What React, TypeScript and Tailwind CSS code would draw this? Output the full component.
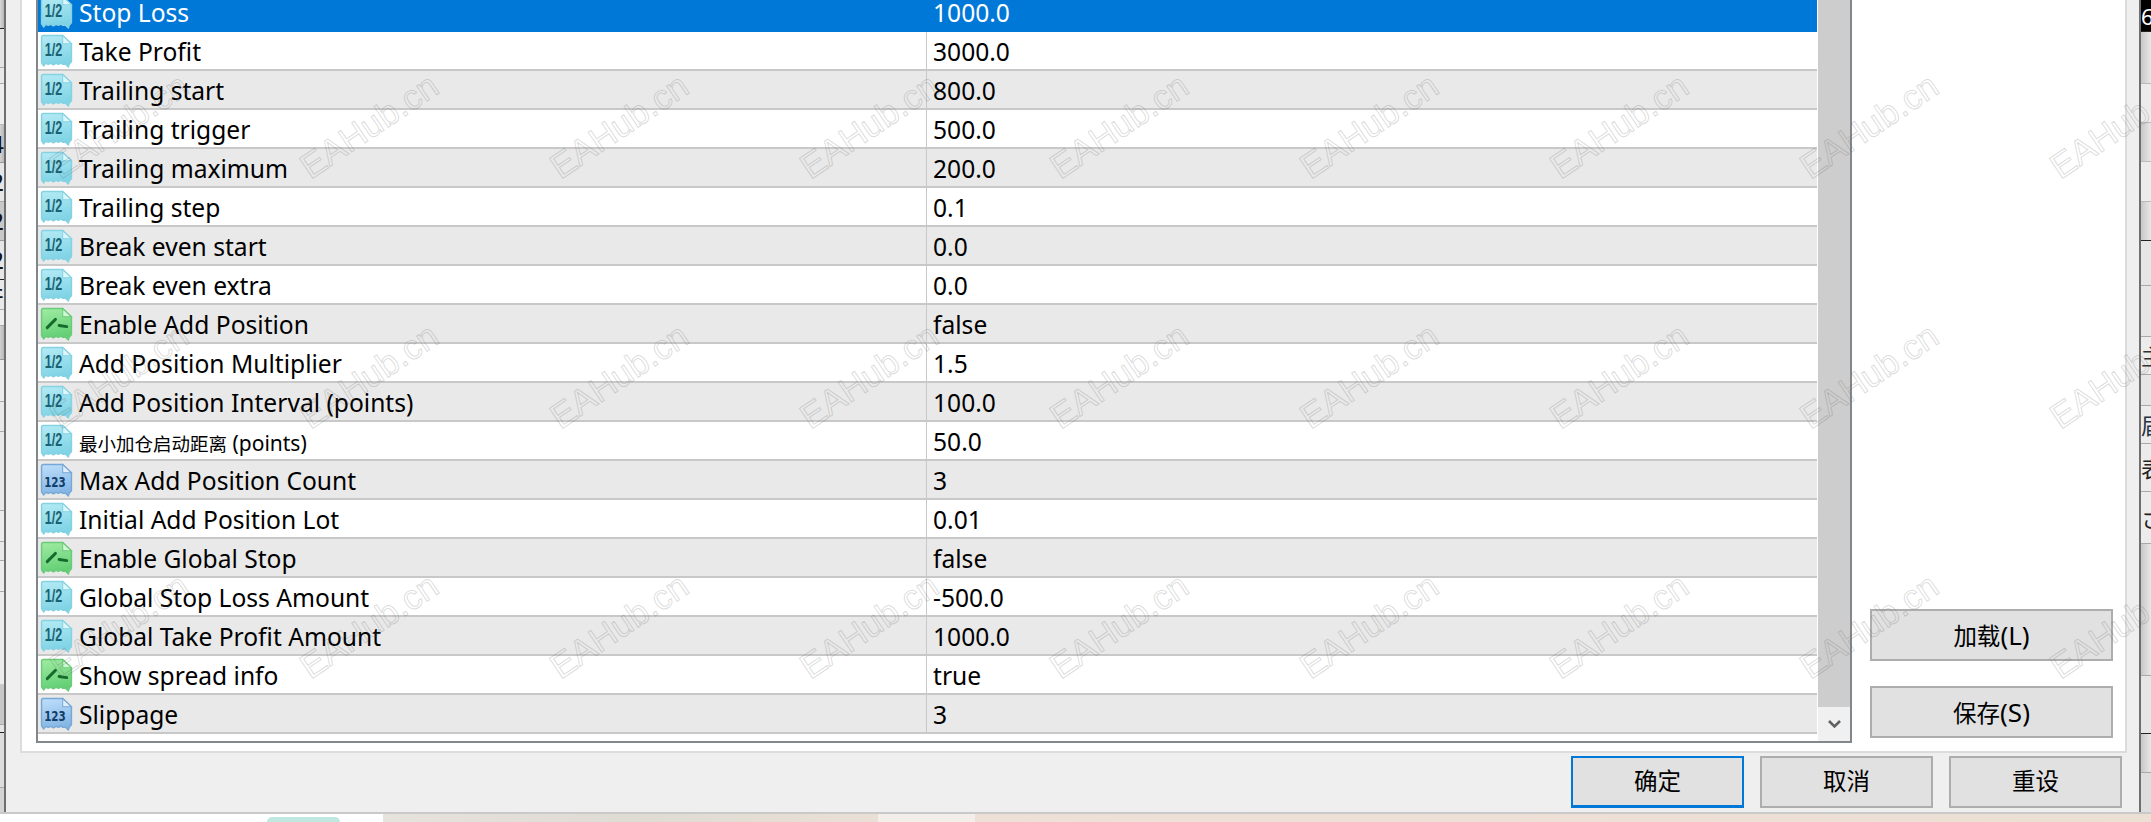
import React from "react";

type Kind = "d" | "b" | "n";
const rows: [Kind, React.ReactNode, string][] = [
  ["d", "Stop Loss", "1000.0"],
  ["d", "Take Profit", "3000.0"],
  ["d", "Trailing start", "800.0"],
  ["d", "Trailing trigger", "500.0"],
  ["d", "Trailing maximum", "200.0"],
  ["d", "Trailing step", "0.1"],
  ["d", "Break even start", "0.0"],
  ["d", "Break even extra", "0.0"],
  ["b", "Enable Add Position", "false"],
  ["d", "Add Position Multiplier", "1.5"],
  ["d", "Add Position Interval (points)", "100.0"],
  ["d", <span className="text-[21px]"><span className="text-[18.5px]">最小加仓启动距离</span> (points)</span>, "50.0"],
  ["n", "Max Add Position Count", "3"],
  ["d", "Initial Add Position Lot", "0.01"],
  ["b", "Enable Global Stop", "false"],
  ["d", "Global Stop Loss Amount", "-500.0"],
  ["d", "Global Take Profit Amount", "1000.0"],
  ["b", "Show spread info", "true"],
  ["n", "Slippage", "3"],
];

const body = "M1.5 3 Q1.5 1.5 3 1.5 H22 L30.5 9.5 V27 L28.5 29 L27.5 32 L25 29.5 H22 L20.5 28 L18 29.5 L15.5 28.5 L13 30 L10.5 28.5 L8 29.5 L5.5 28.5 L3.5 31 L1.5 28 Z";

const palette = {
  d: { a: "#b4ebf5", b: "#7ed3e5", s: "#86d2e3", f: "#def6fa" },
  b: { a: "#a0ecA2", b: "#62cf74", s: "#6ccb7a", f: "#d3f7d4" },
  n: { a: "#bfdffb", b: "#83b5e4", s: "#78a8d6", f: "#e2effb" },
};

function Icon({ kind }: { kind: Kind }) {
  const p = palette[kind];
  const id = `g-${kind}`;
  return (
    <svg width="33" height="34" viewBox="0 0 32 33" className="shrink-0">
      <defs>
        <linearGradient id={id} x1="0" y1="0" x2="0.2" y2="1">
          <stop offset="0" stopColor={p.a} />
          <stop offset="1" stopColor={p.b} />
        </linearGradient>
      </defs>
      <path d={body} fill={`url(#${id})`} stroke={p.s} strokeWidth="1.4" strokeLinejoin="round" />
      <path d="M22 1.5 V9.5 H30.5 Z" fill={p.f} stroke={p.s} strokeWidth="1" />
      {kind === "d" && (
        <text x="13" y="21" textAnchor="middle" fontFamily="'Liberation Sans',sans-serif" fontWeight="700" fontSize="18" textLength="17" lengthAdjust="spacingAndGlyphs" fill="#1a6272">
          1/2
        </text>
      )}
      {kind === "n" && (
        <text x="14.5" y="23" textAnchor="middle" fontFamily="'DejaVu Sans',sans-serif" fontWeight="700" fontSize="13" textLength="21" lengthAdjust="spacingAndGlyphs" fill="#123f69">
          123
        </text>
      )}
      {kind === "b" && (
        <g fill="none" stroke="#156b2c" strokeWidth="2.8" strokeLinecap="round">
          <path d="M7 20 L15 12" />
          <path d="M18.5 18 L26 19" />
        </g>
      )}
    </svg>
  );
}

function Row({ kind, name, value, index }: { kind: Kind; name: React.ReactNode; value: string; index: number }) {
  const selected = index === 0;
  const bg = selected ? "bg-[#0078d7] text-white border-[#0078d7]" : index % 2 === 1 ? "bg-white text-black border-[#c8c8c8]" : "bg-[#e9e9e9] text-black border-[#c8c8c8]";
  return (
    <div className={`grid grid-cols-[888px_1fr] h-[39px] shrink-0 border-b-2 ${bg}`}>
      <div className="flex items-center pl-[2px] gap-[6px] whitespace-nowrap">
        <Icon kind={kind} />
        <span className="pt-[3px]">{name}</span>
      </div>
      <div className={`flex items-center pl-[6px] pt-[3px] border-l ${selected ? "border-[#0078d7]" : "border-[#c8c8c8]"}`}>{value}</div>
    </div>
  );
}

function Btn({ children, focus, wide }: { children: React.ReactNode; focus?: boolean; wide?: boolean }) {
  return (
    <div
      className={`flex items-center justify-center h-[52px] bg-[#e1e1e1] text-black text-[23.5px] ${wide ? "w-[243px]" : "w-[173px]"} ${
        focus ? "border-2 border-[#0078d7] border-b-[3px]" : "border-2 border-[#adadad]"
      }`}
    >
      {children}
    </div>
  );
}

const leftSegs: [number, string, string, string?][] = [
  [29, "bg-gradient-to-r from-[#d8d8d8] to-[#b8b8b8]", "border-[#222]"],
  [39, "bg-[#e4e4e4]", "border-[#aaa]"],
  [16, "bg-[#e8e8e8]", "border-[#aaa]"],
  [41, "bg-[#ededed]", "border-[#bbb]"],
  [38, "bg-gradient-to-r from-[#d2d2d2] to-[#b8b8b8]", "border-[#999]", "4"],
  [39, "bg-[#e6e6e6]", "border-[#aaa]", "2"],
  [39, "bg-[#c8c8c8]", "border-[#999]", "2"],
  [39, "bg-[#e6e6e6]", "border-[#222]", "2"],
  [30, "bg-[#e8e8e8]", "border-[#aaa]", "井"],
  [16, "bg-[#eeeeee]", "border-[#aaa]"],
  [34, "bg-gradient-to-r from-[#d0d0d0] to-[#b8b8b8]", "border-[#999]"],
  [42, "bg-[#ececec]", "border-[#aaa]"],
  [30, "bg-[#e8e8e8]", "border-[#aaa]"],
  [79, "bg-[#e8e8e8]", "border-[#aaa]"],
  [31, "bg-[#ececec]", "border-[#aaa]"],
  [19, "bg-[#e8e8e8]", "border-[#aaa]"],
  [31, "bg-[#ececec]", "border-[#aaa]"],
  [93, "bg-[#ececec]", "border-[#ccc]"],
  [40, "bg-[#c8c8c8]", "border-[#aaa]"],
  [8, "bg-[#e6e6e6]", "border-[#222]"],
  [55, "bg-[#dcdcdc]", "border-[#aaa]"],
  [24, "bg-[#d4d4d4]", "border-transparent"],
];

const G = "bg-gradient-to-r from-[#c8c8c8] to-[#e8e8e8]";
const rightSegs: [number, string, string, string?][] = [
  [32, "bg-black text-white", "border-[#222]", "6"],
  [52, G, "border-[#bbb]"],
  [39, "bg-[#ececec]", "border-[#bbb]"],
  [39, G, "border-[#bbb]"],
  [40, "bg-[#ececec]", "border-[#bbb]"],
  [39, G, "border-[#222]"],
  [45, "bg-[#e6e6e6]", "border-[#aaa]"],
  [51, "bg-[#e6e6e6]", "border-[#aaa]"],
  [38, "bg-[#ececec] text-[#333]", "border-[#aaa]", "主"],
  [31, "bg-[#e6e6e6]", "border-[#aaa]"],
  [38, "bg-[#ececec] text-[#234]", "border-[#aaa]", "届"],
  [48, "bg-[#ececec] text-[#222]", "border-[#aaa]", "表"],
  [52, "bg-[#ececec] text-[#222]", "border-[#aaa]", "さ"],
  [132, G, "border-[#aaa]"],
  [58, "bg-[#e6e6e6]", "border-[#222]"],
  [39, G, "border-[#aaa]"],
  [39, "bg-[#dedede]", "border-transparent"],
];

const cells = Array.from({ length: 50 }, (_, i) => i);

export default function App() {
  return (
    <div className="relative w-[2151px] h-[822px] overflow-hidden flex flex-col text-[24.6px] leading-none font-['Noto_Sans','Noto_Sans_CJK_SC',sans-serif]">
      <div className="flex h-[812px] shrink-0">
        <div className="flex w-[6px] shrink-0">
          <div className="flex flex-col w-[4px] overflow-hidden">
            {leftSegs.map(([h, bg, b, t], i) => (
              <div key={i} style={{ height: h }} className={`shrink-0 flex items-center justify-end border-b whitespace-nowrap overflow-hidden text-[24px] text-[#111] ${bg} ${b}`}>
                {t}
              </div>
            ))}
          </div>
          <div className="w-[2px] bg-[#6f6f6f]" />
        </div>

        <div className="flex flex-col w-[2133px] bg-[#efefef]">
          <div className="flex ml-[14px] mr-[12px] h-[753px] pl-[16px] bg-white border-l-2 border-b-2 border-r-2 border-[#dcdcdc] shrink-0 box-border">
            <div className="flex w-[1816px] h-[743px] -ml-[2px] border-l-2 border-b-2 border-r-2 border-[#82878c] overflow-hidden shrink-0">
              <div className="flex flex-col w-[1779px] -mt-[7px] shrink-0">
                {rows.map(([k, n, v], i) => (
                  <Row key={i} kind={k} name={n} value={v} index={i} />
                ))}
              </div>
              <div className="flex flex-col w-[33px] ml-[1px] shrink-0">
                <div className="h-[707px] bg-[#cdcdcd]" />
                <div className="flex flex-1 items-center justify-center bg-[#f0f0f0] text-[#606060]">
                  <svg width="13" height="10" viewBox="0 0 13 10" fill="none" stroke="currentColor" strokeWidth="2.6">
                    <path d="M1 2 L6.5 7.5 L12 2" />
                  </svg>
                </div>
              </div>
            </div>
            <div className="flex flex-col justify-end gap-[25px] pl-[18px] pb-[13px]">
              <Btn wide>
                <span>加载<span className="text-[26px]">(L)</span></span>
              </Btn>
              <Btn wide>
                <span>保存<span className="text-[26px]">(S)</span></span>
              </Btn>
            </div>
          </div>
          <div className="flex justify-end gap-[16px] pt-[3px] pr-[17px]">
            <Btn focus>确定</Btn>
            <Btn>取消</Btn>
            <Btn>重设</Btn>
          </div>
        </div>

        <div className="flex w-[12px] shrink-0">
          <div className="w-[2px] bg-[#6f6f6f]" />
          <div className="flex flex-col w-[10px] overflow-hidden">
            {rightSegs.map(([h, bg, b, t], i) => (
              <div key={i} style={{ height: h }} className={`shrink-0 flex items-center border-b whitespace-nowrap overflow-hidden text-[22px] ${bg} ${b}`}>
                {t}
              </div>
            ))}
          </div>
        </div>
      </div>

      <div className="flex h-[10px] shrink-0 border-t-2 border-[#c9c9c9]">
        <div className="flex items-end w-[383px] bg-white pl-[267px]">
          <div className="w-[73px] h-[5px] rounded-t-[40px] bg-[#bfe9e0]" />
        </div>
        <div className="w-[495px] bg-gradient-to-r from-[#e6e2dc] via-[#dfdcd4] to-[#eadfd5]" />
        <div className="w-[97px] bg-[#f3eeea]" />
        <div className="flex-1 bg-gradient-to-r from-[#eee0d6] to-[#ecdfd4]" />
      </div>

      <div className="absolute -left-[208px] -top-[180px] grid grid-cols-[repeat(10,250px)] pointer-events-none">
        {cells.map((i) => (
          <div key={i} className="w-[250px] h-[250px]">
            <div className="flex items-center justify-center w-[153px] h-[110px]">
              <span className="-rotate-[34deg] whitespace-nowrap text-[35px] text-transparent font-['Liberation_Sans',sans-serif] [-webkit-text-stroke:1px_rgba(90,90,90,0.22)]">
                EAHub.cn
              </span>
            </div>
          </div>
        ))}
      </div>
    </div>
  );
}
